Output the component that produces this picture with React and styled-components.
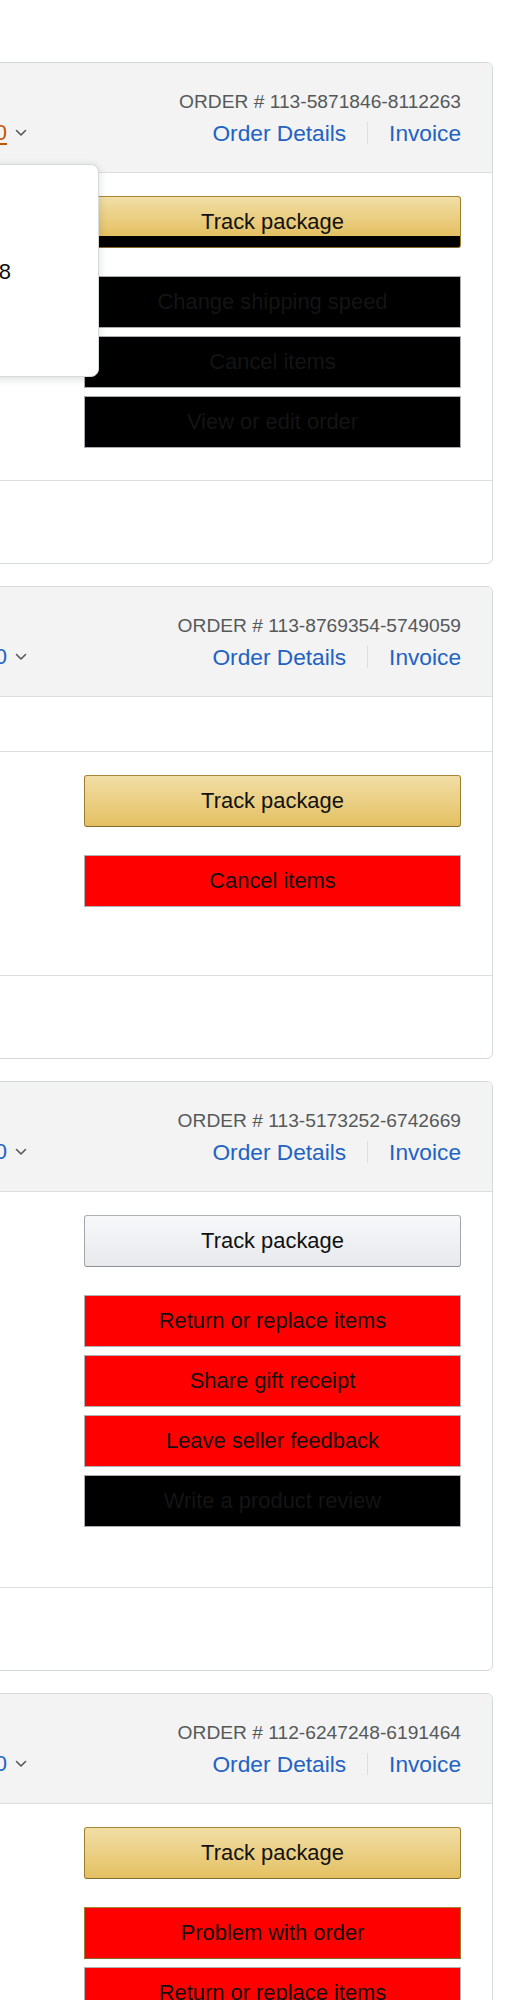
import React from "react";
import styled, { createGlobalStyle, css } from "styled-components";

const orders = [
  {
    id: "113-5871846-8112263",
    placed: "March 3, 2024",
    total: "$48.90",
    shipTo: "Unit 1210",
    open: true,
    notice: false,
    sectionHeight: 308,
    actions: [
      { label: "Track package", kind: "cut" },
      { label: "Change shipping speed", kind: "dark" },
      { label: "Cancel items", kind: "dark" },
      { label: "View or edit order", kind: "dark" },
    ],
  },
  {
    id: "113-8769354-5749059",
    placed: "March 1, 2024",
    total: "$21.40",
    shipTo: "Unit 1210",
    notice: true,
    sectionHeight: 224,
    actions: [
      { label: "Track package", kind: "gold" },
      { label: "Cancel items", kind: "red" },
    ],
  },
  {
    id: "113-5173252-6742669",
    placed: "February 24, 2024",
    total: "$16.30",
    shipTo: "Unit 1210",
    notice: false,
    sectionHeight: 396,
    actions: [
      { label: "Track package", kind: "gray" },
      { label: "Return or replace items", kind: "red" },
      { label: "Share gift receipt", kind: "red" },
      { label: "Leave seller feedback", kind: "red" },
      { label: "Write a product review", kind: "dark" },
    ],
  },
  {
    id: "112-6247248-6191464",
    placed: "February 19, 2024",
    total: "$33.80",
    shipTo: "Unit 1210",
    notice: false,
    sectionHeight: 396,
    actions: [
      { label: "Track package", kind: "gold" },
      { label: "Problem with order", kind: "red", goldEdge: true },
      { label: "Return or replace items", kind: "red" },
      { label: "Share gift receipt", kind: "red" },
    ],
  },
];

const GlobalStyle = createGlobalStyle`
  html, body {
    margin: 0;
    padding: 0;
    background: #ffffff;
  }
  body {
    font-family: "Liberation Sans", Arial, sans-serif;
    overflow-x: hidden;
  }
`;

const Page = styled.main`
  padding: 62px 36px 0 0;
  display: flex;
  flex-direction: column;
  gap: 22px;
`;

/* the page is scrolled sideways: only the right end of each card is in view */
const Card = styled.article`
  position: relative;
  margin-left: -600px;
  border: 1px solid #d5d9d9;
  border-radius: 6px;
  background: #ffffff;
`;

const Header = styled.header`
  display: flex;
  align-items: flex-start;
  justify-content: space-between;
  padding: 27px 31px 24px 20px;
  background: #f3f3f3;
  border-bottom: 1px solid #dddddd;
  border-radius: 6px 6px 0 0;
`;

const Facts = styled.div`
  flex: 0 0 606px;
  display: flex;
  justify-content: flex-end;
  gap: 40px;
`;

const Fact = styled.div`
  position: relative;
  flex-shrink: 0;
  display: flex;
  flex-direction: column;
  gap: 4px;
  white-space: nowrap;
`;

const Label = styled.span`
  font-size: 19.2px;
  line-height: 24px;
  color: #565959;
  text-transform: uppercase;
`;

const Value = styled.span`
  display: flex;
  align-items: center;
  gap: 8px;
  height: 30px;
  font-size: 22px;
  color: #565959;
`;

const ShipLink = styled.a`
  color: ${(p) => (p.$active ? "#c45500" : "#2162c4")};
  text-decoration: ${(p) => (p.$active ? "underline" : "none")};
  text-underline-offset: 3px;
  cursor: pointer;
`;

const Popover = styled.div`
  position: absolute;
  top: calc(100% + 16px);
  right: -72px;
  z-index: 2;
  box-sizing: border-box;
  width: 318px;
  min-height: 213px;
  padding: 16px 20px;
  background: #ffffff;
  border: 1px solid #d5d9d9;
  border-radius: 8px;
  box-shadow: 0 2px 8px rgba(15, 17, 17, 0.15);
  font-size: 22px;
  line-height: 26px;
  color: #0f1111;
  white-space: nowrap;
  text-align: left;

  strong {
    font-weight: 700;
  }
`;

const OrderInfo = styled.div`
  display: flex;
  flex-direction: column;
  align-items: flex-end;
  gap: 4px;
  white-space: nowrap;
`;

const Links = styled.div`
  display: flex;
  align-items: center;
  height: 30px;
  font-size: 22.7px;
`;

const TextLink = styled.a`
  color: #2162c4;
  text-decoration: none;
  cursor: pointer;
`;

const Divider = styled.span`
  width: 1px;
  height: 22px;
  margin: 0 21px;
  background: #dddddd;
`;

const Notice = styled.div`
  height: 54px;
  border-bottom: 1px solid #dddddd;
`;

const Shipment = styled.div`
  box-sizing: border-box;
  min-height: ${(p) => p.$height}px;
  display: flex;
  justify-content: flex-end;
  padding: 23px 31px 31px 20px;
  border-bottom: 1px solid #dddddd;
`;

const Actions = styled.div`
  width: 377px;
  display: flex;
  flex-direction: column;
  gap: 8px;
`;

const gold = css`
  background: linear-gradient(to bottom, #f1dea6, #e4c062);
  border-color: #a88734 #9c7e31 #846a29;
  border-radius: 3px;
`;

const kinds = {
  gold,
  cut: css`
    background: linear-gradient(
      to bottom,
      #f1dea6 0,
      #e4c062 78%,
      #000000 78%,
      #000000 100%
    );
    border-color: #a88734 #9c7e31 #846a29;
    border-radius: 3px;
  `,
  gray: css`
    background: linear-gradient(to bottom, #f7f8fa, #e7e9ec);
    border-color: #adb1b8 #a2a6ac #8d9096;
    border-radius: 3px;
  `,
  red: css`
    background: #ff0000;
    border-color: #adb1b8;
  `,
  dark: css`
    background: #000000;
    border-color: #a9acb3;
    color: #141414;
  `,
};

const ActionButton = styled.button`
  box-sizing: border-box;
  width: 100%;
  height: 52px;
  padding: 0;
  border: 1px solid;
  border-radius: 0;
  font-family: "Liberation Sans", Arial, sans-serif;
  font-size: 21.9px;
  color: #111111;
  cursor: pointer;
  ${(p) => kinds[p.$kind]}
  ${(p) =>
    p.$goldEdge &&
    css`
      border-color: #a88734 #9c7e31 #846a29;
    `}

  &:first-child {
    margin-bottom: 20px;
  }
`;

const Footer = styled.footer`
  box-sizing: border-box;
  height: 82px;
  display: flex;
  align-items: center;
  padding: 0 31px 0 20px;
  font-size: 22px;
`;

function Chevron() {
  return (
    <svg width="12" height="8" viewBox="0 0 12 8" aria-hidden="true">
      <polyline
        points="1.5,1.5 6,6 10.5,1.5"
        fill="none"
        stroke="#565959"
        strokeWidth="1.6"
        strokeLinecap="round"
        strokeLinejoin="round"
      />
    </svg>
  );
}

function OrderCard({ order }) {
  return (
    <Card>
      <Header>
        <Facts>
          <Fact>
            <Label>Order placed</Label>
            <Value>{order.placed}</Value>
          </Fact>
          <Fact>
            <Label>Total</Label>
            <Value>{order.total}</Value>
          </Fact>
          <Fact>
            <Label>Ship to</Label>
            <Value>
              <ShipLink $active={order.open}>{order.shipTo}</ShipLink>
              <Chevron />
            </Value>
            {order.open && (
              <Popover>
                <strong>Jordan Avery</strong>
                <div>1200 12th Ave S</div>
                <div>Unit 4B</div>
                <div>SEATTLE, WA 98108</div>
                <div>United States</div>
              </Popover>
            )}
          </Fact>
        </Facts>
        <OrderInfo>
          <Label>Order # {order.id}</Label>
          <Links>
            <TextLink>Order Details</TextLink>
            <Divider />
            <TextLink>Invoice</TextLink>
          </Links>
        </OrderInfo>
      </Header>
      {order.notice && <Notice />}
      <Shipment $height={order.sectionHeight}>
        <Actions>
          {order.actions.map((a) => (
            <ActionButton key={a.label} $kind={a.kind} $goldEdge={a.goldEdge}>
              {a.label}
            </ActionButton>
          ))}
        </Actions>
      </Shipment>
      <Footer>
        <TextLink>Archive order</TextLink>
      </Footer>
    </Card>
  );
}

export default function App() {
  return (
    <>
      <GlobalStyle />
      <Page>
        {orders.map((o) => (
          <OrderCard key={o.id} order={o} />
        ))}
      </Page>
    </>
  );
}
